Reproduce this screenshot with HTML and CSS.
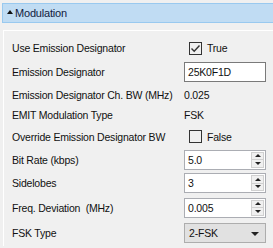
FILE: index.html
```html
<!DOCTYPE html>
<html lang="en"><head>
  <meta name="viewport" content="width=device-width, initial-scale=1.0">
  <title>Modulation</title>
  <link rel="stylesheet" href="styles.css">
</head>
<body>
  <!-- Group header -->
  <div class="group-head"><span class="caret"></span>Modulation</div>

  <!-- Property rows -->
  <div class="panel">
    <div class="row r24">
      <span class="label">Use Emission Designator</span>
      <label class="check"><span class="box"><svg width="11" height="11" viewBox="0 0 11 11"><path d="M1.5 5.5 L4.2 8.2 L9.5 2.5" fill="none" stroke="#333" stroke-width="1.4"/></svg></span>True</label>
    </div>
    <div class="row r24">
      <span class="label">Emission Designator</span>
      <div class="field">25K0F1D</div>
    </div>
    <div class="row r21">
      <span class="label">Emission Designator Ch. BW (MHz)</span>
      <span class="value">0.025</span>
    </div>
    <div class="row r20">
      <span class="label">EMIT Modulation Type</span>
      <span class="value">FSK</span>
    </div>
    <div class="row r23">
      <span class="label">Override Emission Designator BW</span>
      <label class="check"><span class="box"></span>False</label>
    </div>
    <div class="row r23">
      <span class="label">Bit Rate (kbps)</span>
      <div class="field spin">5.0<span class="arrows"><i class="up"></i><i class="down"></i></span></div>
    </div>
    <div class="row r24">
      <span class="label">Sidelobes</span>
      <div class="field spin">3<span class="arrows"><i class="up"></i><i class="down"></i></span></div>
    </div>
    <div class="row r25">
      <span class="label">Freq. Deviation&nbsp; (MHz)</span>
      <div class="field spin">0.005<span class="arrows"><i class="up"></i><i class="down"></i></span></div>
    </div>
    <div class="row r26">
      <span class="label">FSK Type</span>
      <div class="select">2-FSK<i class="drop"></i></div>
    </div>
  </div>
</body>
</html>
```

FILE: styles.css
```css
body {
  margin: 0;
  background: #f0f0f0;
  font-family: "Liberation Sans", Arial, sans-serif;
  font-size: 10.5px;
  letter-spacing: -0.2px;
  color: #111;
  overflow: hidden;
}
.group-head {
  margin: 3px 0 0 2px;
  height: 18px;
  border: 1px solid #99c9ef;
  border-right: none;
  background: #c0dcf3;
  display: flex;
  align-items: center;
  padding-left: 4px;
  font-size: 11px;
  color: #102040;
}
.caret {
  width: 0;
  height: 0;
  border-left: 3.5px solid transparent;
  border-right: 3.5px solid transparent;
  border-bottom: 4px solid #111;
  margin: 0 2px 2px 0;
}
.panel {
  margin: 7px 0 0 3px;
  border-top: 1px solid #fff;
  border-left: 1px solid #fff;
  padding-top: 5px;
}
.row {
  display: grid;
  grid-template-columns: 172px 82px;
  align-items: center;
  padding-left: 8px;
}
.r20 { height: 20px; }
.r21 { height: 21px; }
.r23 { height: 23px; }
.r24 { height: 24px; }
.r25 { height: 25px; }
.r26 { height: 26px; }
.label {
  white-space: nowrap;
}
.check {
  display: flex;
  align-items: center;
  padding-left: 5px;
}
.box {
  width: 11px;
  height: 11px;
  border: 1px solid #333;
  margin-right: 5px;
  display: flex;
  align-items: center;
  justify-content: center;
}
.field {
  border: 1px solid #7a7a7a;
  background: #fff;
  display: flex;
  align-items: center;
  padding-left: 3px;
  box-sizing: border-box;
  height: 20px;
}
.spin {
  border-color: #abadb3;
  position: relative;
}
.arrows {
  position: absolute;
  right: 1px;
  top: 1px;
  bottom: 1px;
  width: 13px;
  display: flex;
  flex-direction: column;
  border: 1px solid #d0d0d0;
  box-sizing: border-box;
}
.arrows i {
  flex: 1;
  display: flex;
  align-items: center;
  justify-content: center;
  background: #f0f0f0;
}
.arrows i.up { border-bottom: 1px solid #d0d0d0; }
.arrows i::after {
  content: "";
  border-left: 3px solid transparent;
  border-right: 3px solid transparent;
}
.arrows i.up::after { border-bottom: 3px solid #222; }
.arrows i.down::after { border-top: 3px solid #222; }
.select {
  height: 20px;
  box-sizing: border-box;
  border: 1px solid #adadad;
  background: #e1e1e1;
  display: flex;
  align-items: center;
  padding-left: 4px;
  position: relative;
}
.drop {
  position: absolute;
  right: 6px;
  top: 8px;
  border-left: 4px solid transparent;
  border-right: 4px solid transparent;
  border-top: 4px solid #222;
}
```
